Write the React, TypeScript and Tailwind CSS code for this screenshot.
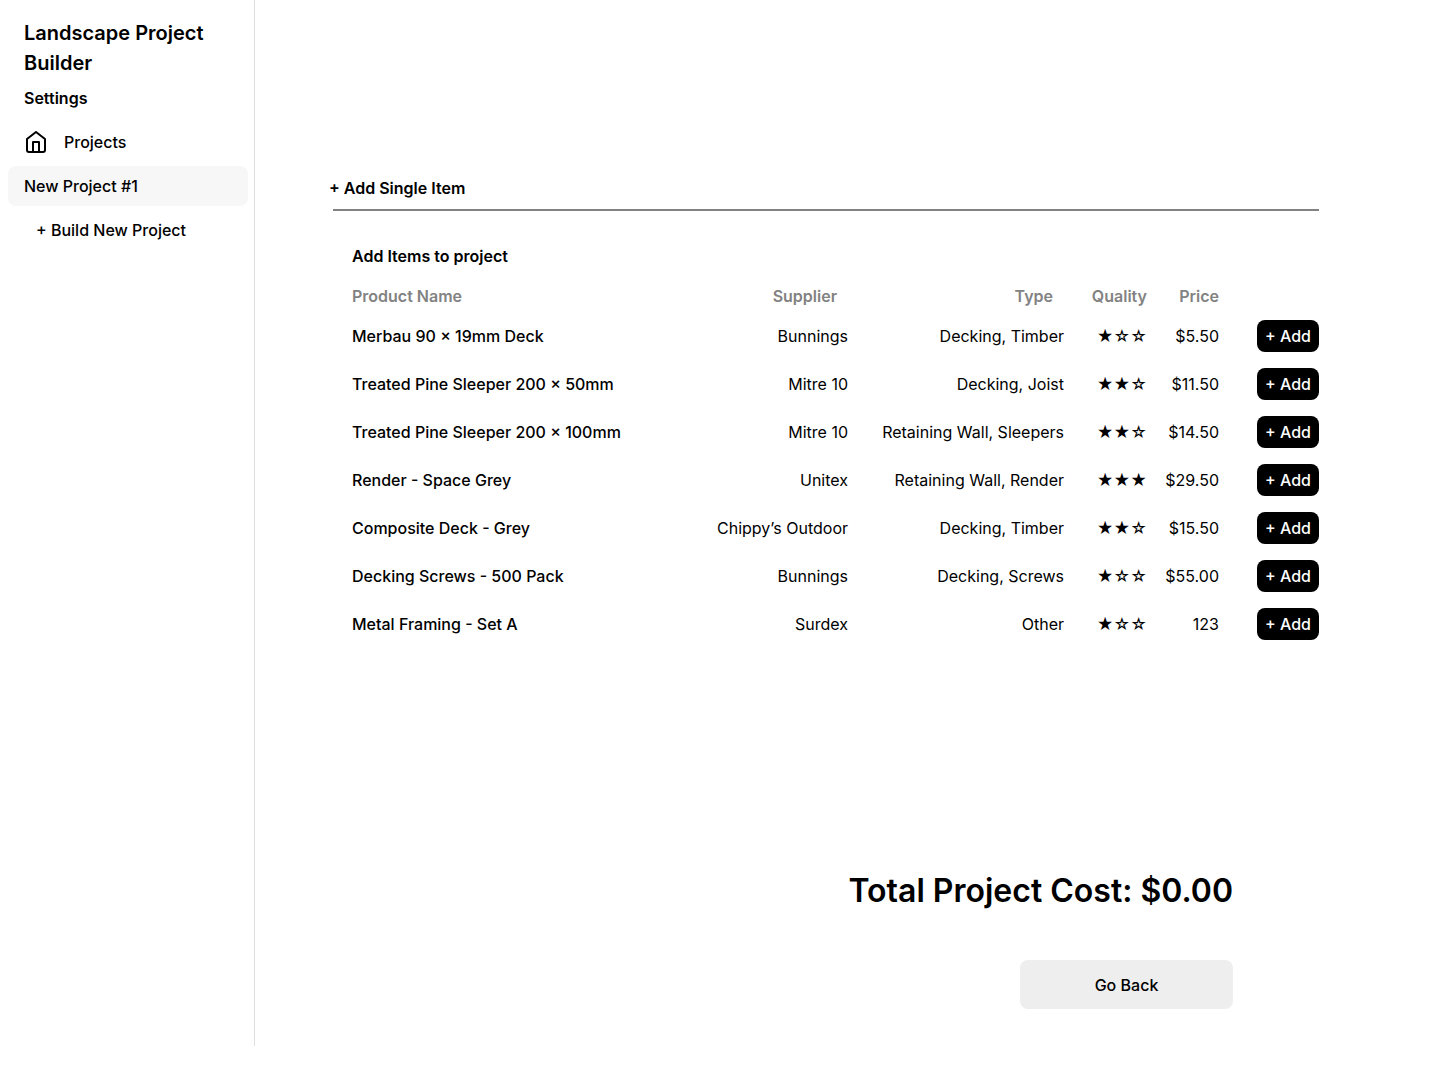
import { FiHome } from "react-icons/fi";

type Item = {
  name: string;
  supplier: string;
  type: string;
  quality: number;
  price: string;
};

const items: Item[] = [
  { name: "Merbau 90 × 19mm Deck", supplier: "Bunnings", type: "Decking, Timber", quality: 1, price: "$5.50" },
  { name: "Treated Pine Sleeper 200 × 50mm", supplier: "Mitre 10", type: "Decking, Joist", quality: 2, price: "$11.50" },
  { name: "Treated Pine Sleeper 200 × 100mm", supplier: "Mitre 10", type: "Retaining Wall, Sleepers", quality: 2, price: "$14.50" },
  { name: "Render - Space Grey", supplier: "Unitex", type: "Retaining Wall, Render", quality: 3, price: "$29.50" },
  { name: "Composite Deck - Grey", supplier: "Chippy’s Outdoor", type: "Decking, Timber", quality: 2, price: "$15.50" },
  { name: "Decking Screws - 500 Pack", supplier: "Bunnings", type: "Decking, Screws", quality: 1, price: "$55.00" },
  { name: "Metal Framing - Set A", supplier: "Surdex", type: "Other", quality: 1, price: "123" },
];

function Sidebar() {
  return (
    <aside className="w-[255px] shrink-0 border-r border-[#dfdfdf] px-2 pt-[18px]">
      <h1 className="px-4 text-xl leading-[30px] font-semibold">Landscape Project Builder</h1>
      <h2 className="mt-2 px-4 text-base font-semibold">Settings</h2>
      <nav className="mt-3 -mr-0.5 flex flex-col gap-1 font-medium">
        <a href="#projects" className="flex h-10 items-center gap-4 rounded-lg px-4">
          <FiHome className="size-6" aria-hidden="true" />
          Projects
        </a>
        <a href="#project-1" aria-current="page" className="flex h-10 items-center rounded-lg bg-[#f7f7f7] px-4">
          New Project #1
        </a>
        <button type="button" className="flex h-10 items-center px-7">
          + Build New Project
        </button>
      </nav>
    </aside>
  );
}

function ItemTable() {
  return (
    <table className="w-full table-fixed border-collapse text-right">
      <caption className="pb-2 text-left leading-8 font-semibold">Add Items to project</caption>
      <colgroup>
        <col />
        <col className="w-[180px]" />
        <col className="w-[216px]" />
        <col className="w-[83px]" />
        <col className="w-[72px]" />
        <col className="w-[100px]" />
      </colgroup>
      <thead className="text-[#828282]">
        <tr className="h-8">
          <th scope="col" className="text-left font-semibold">Product Name</th>
          <th scope="col" className="pr-[11px] font-semibold">Supplier</th>
          <th scope="col" className="pr-[11px] font-semibold">Type</th>
          <th scope="col" className="font-semibold">Quality</th>
          <th scope="col" className="font-semibold">Price</th>
          <td />
        </tr>
      </thead>
      <tbody>
        {items.map((item) => (
          <tr key={item.name} className="h-12">
            <th scope="row" className="text-left font-medium">{item.name}</th>
            <td>{item.supplier}</td>
            <td>{item.type}</td>
            <td aria-label={`${item.quality} of 3 stars`}>
              {"★".repeat(item.quality) + "☆".repeat(3 - item.quality)}
            </td>
            <td>{item.price}</td>
            <td>
              <button
                type="button"
                className="h-8 w-[62px] rounded-lg bg-black align-middle font-medium text-white"
              >
                + Add
              </button>
            </td>
          </tr>
        ))}
      </tbody>
    </table>
  );
}

export default function App() {
  return (
    <div className="flex min-h-screen bg-white pb-[34px] font-['Inter',sans-serif] text-base text-black">
      <Sidebar />
      <main className="min-w-0 flex-1 pt-44 pr-[121px] pl-[74px]">
        <button type="button" className="block h-6 font-semibold">+ Add Single Item</button>
        <hr className="mt-[9px] ml-1 border-t-2 border-[#828282]" />
        <section className="mt-[29px] pl-[23px]">
          <ItemTable />
        </section>
        <div className="mt-[218px] flex flex-col items-end gap-11 pr-[86px]">
          <p className="text-[32px] leading-[50px] font-semibold">Total Project Cost: $0.00</p>
          <button type="button" className="h-[49px] w-[213px] rounded-lg bg-[#eeeeee] font-medium">
            Go Back
          </button>
        </div>
      </main>
    </div>
  );
}
